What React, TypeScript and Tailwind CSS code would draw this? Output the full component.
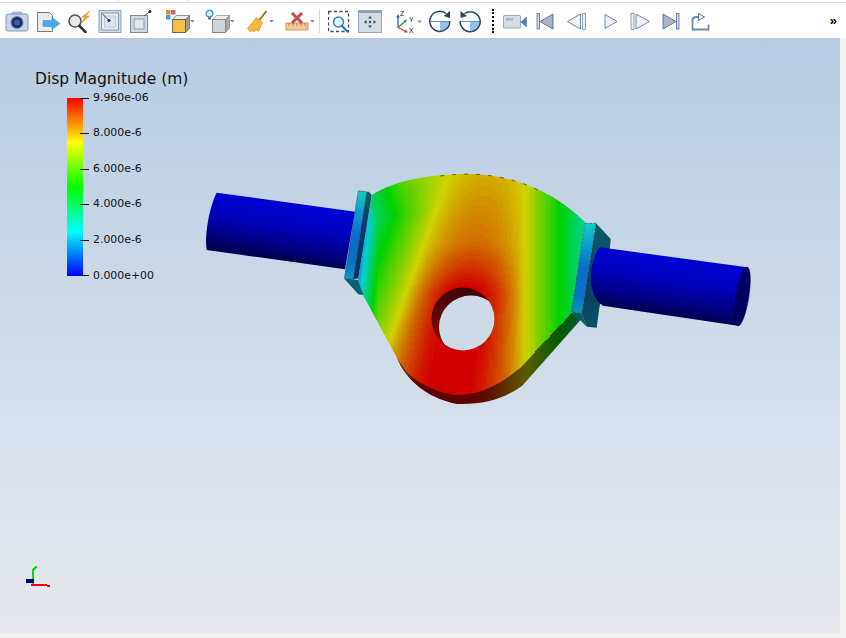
import React, { useMemo } from "react";

const stops: [number, number, number, number][] = [
  [0, 0, 0, 255],
  [0.25, 0, 255, 255],
  [0.5, 0, 255, 0],
  [0.75, 255, 255, 0],
  [1, 255, 0, 0],
];
function ramp(v: number, k: number) {
  const t = Math.max(0, Math.min(1, v));
  for (let i = 1; i < stops.length; i++) {
    if (t <= stops[i][0]) {
      const a = stops[i - 1];
      const b = stops[i];
      const f = (t - a[0]) / (b[0] - a[0]);
      const c = [1, 2, 3].map((j) => Math.round((a[j] + (b[j] - a[j]) * f) * k));
      return `rgb(${c[0]},${c[1]},${c[2]})`;
    }
  }
  return "rgb(255,0,0)";
}
function field(x: number, y: number) {
  const t = (y - 180) / 160;
  const xL = 447 - 57 * t;
  const xR = 525;
  if (x < xL) {
    const d = xL - x;
    let v = 0.75 - d * 0.00625;
    if (y < 215) v += ((215 - y) / 35) * 0.14 * Math.min(1, d / 45);
    if (x < 378 && y > 205) v -= (378 - x) * 0.012 * Math.min(1, (y - 205) / 20);
    return v;
  }
  if (x > xR) return 0.75 - (x - xR) * 0.0072;
  const c = (xL + xR) / 2;
  const h = (xR - xL) / 2;
  const s = Math.abs(x - c) / h;
  const vc = Math.min(1.02, 0.8 + 0.18 * t + 0.3 * Math.max(0, t - 0.4));
  return 0.75 + (vc - 0.75) * (1 - s * s);
}
const LEVELS = 96;
function buildBins(step: number) {
  const bins: string[] = Array(LEVELS + 1).fill("");
  for (let y = 168; y < 410; y += step) {
    for (let x = 345; x < 600; x += step) {
      const v = field(x + step / 2, y + step / 2);
      const b = Math.max(0, Math.min(LEVELS, Math.round(v * LEVELS)));
      bins[b] += `M${x} ${y}h${step}v${step}h-${step}z`;
    }
  }
  return bins;
}

const FACE =
  "M372 195C395 180 430 174 470 174C515 175 555 192 585 222L572 313L520 368C500 385 480 394 462 395C443 395 423 387 407 373L397 358L363 295L358 280Z";
const RIM = "M397 358C405 378 425 398 457 404C485 405 505 398 522 386L584 316L572 313L520 368L450 380Z";

function Part() {
  const bins = useMemo(() => buildBins(2), []);
  return (
    <svg className="absolute inset-0" width={846} height={597} viewBox="0 38 846 597">
      <defs>
        <clipPath id="faceClip"><path d={FACE} /></clipPath>
        <clipPath id="rimClip"><path d={RIM} /></clipPath>
        <clipPath id="holeClip"><ellipse cx={463} cy={319} rx={31.5} ry={31.5} /></clipPath>
        <linearGradient id="cylL" gradientUnits="userSpaceOnUse" x1={286} y1={202} x2={276} y2={260}>
          <stop offset="0" stopColor="#0000d4" />
          <stop offset="0.4" stopColor="#0000bc" />
          <stop offset="0.72" stopColor="#000088" />
          <stop offset="1" stopColor="#00004c" />
        </linearGradient>
        <linearGradient id="cylR" gradientUnits="userSpaceOnUse" x1={673} y1={257} x2={664} y2={316}>
          <stop offset="0" stopColor="#0000d4" />
          <stop offset="0.4" stopColor="#0000bc" />
          <stop offset="0.72" stopColor="#000088" />
          <stop offset="1" stopColor="#00004c" />
        </linearGradient>
        <linearGradient id="flangeF" x1="0" y1="0" x2="0" y2="1">
          <stop offset="0" stopColor="#12ccc4" />
          <stop offset="0.2" stopColor="#10a4cc" />
          <stop offset="0.5" stopColor="#0a6cc8" />
          <stop offset="0.8" stopColor="#0a70c4" />
          <stop offset="1" stopColor="#0e98c0" />
        </linearGradient>
        <linearGradient id="flangeS" x1="0" y1="0" x2="0" y2="1">
          <stop offset="0" stopColor="#0a6a68" />
          <stop offset="0.3" stopColor="#0a3c70" />
          <stop offset="1" stopColor="#0a3060" />
        </linearGradient>
        <linearGradient id="flangeB" x1="0" y1="0" x2="0" y2="1">
          <stop offset="0" stopColor="#0a5e68" />
          <stop offset="0.55" stopColor="#0a3c68" />
          <stop offset="1" stopColor="#0a5060" />
        </linearGradient>
        <linearGradient id="wall" x1="0" y1="0" x2="0" y2="1">
          <stop offset="0" stopColor="#3c0404" />
          <stop offset="0.55" stopColor="#6a0808" />
          <stop offset="1" stopColor="#a00c0c" />
        </linearGradient>
      </defs>

      <path d="M216.7 192.7L355 211.7L345 269.3L206.7 250C204 235 210 205 216.7 192.7Z" fill="url(#cylL)" />

      <g clipPath="url(#rimClip)" shapeRendering="crispEdges">
        {bins.map((d, i) => d && <path key={i} d={d} fill={ramp(i / LEVELS, 0.36)} />)}
      </g>
      <g clipPath="url(#faceClip)" shapeRendering="crispEdges">
        {bins.map((d, i) => d && <path key={i} d={d} fill={ramp(i / LEVELS, 0.82)} />)}
      </g>
      <path d="M440 176C452 174.500 462 174 470 174C500 175 525 182 545 194" fill="none" stroke="#000" strokeWidth={0.5} strokeDasharray="4 8" />
      <path d="M535 352L572 313" fill="none" stroke="#000" strokeWidth={0.6} strokeDasharray="16 6" />

      <ellipse cx={463} cy={319} rx={31.5} ry={31.5} fill="url(#wall)" />
      <ellipse cx={471} cy={327} rx={32} ry={31.5} fill="#cddae8" clipPath="url(#holeClip)" />

      <polygon points="358.3,190.7 366.7,191.7 353.3,279.3 344.3,278.7" fill="url(#flangeF)" stroke="#0a3540" strokeWidth={0.4} />
      <polygon points="366.7,191.7 369,191.7 371.7,195 358.3,278.3 353.3,279.3" fill="url(#flangeS)" />
      <polygon points="344.3,278.7 353.3,279.3 358,280 363.3,295 358.3,294.3" fill="#0a5f70" />

      <polygon points="596,223.3 610.7,239 610,247.3 599.3,308.3 596.7,327.7 586.7,326.7 581.7,313.3" fill="url(#flangeB)" />
      <polygon points="585,223.3 596,223.3 581.7,313.3 571.7,311.7" fill="url(#flangeF)" stroke="#0a3540" strokeWidth={0.4} strokeDasharray="3 1" />
      <polygon points="571.7,311.7 581.7,313.3 586.7,326.7 580,320" fill="#0a5a62" />

      <path d="M600 247.3L747 267.3L737.7 325.7L603 305.7C585 295 590 258 600 247.3Z" fill="url(#cylR)" />
      <ellipse cx={742.5} cy={296.5} rx={6.3} ry={29.8} transform="rotate(9 742.5 296.5)" fill="#000064" stroke="#000030" strokeWidth={0.5} />

      <g fill="none" strokeLinecap="square" shapeRendering="crispEdges">
        <path d="M33 584V570L36 567" stroke="#00e000" strokeWidth={1.8} />
        <path d="M32 584.500H43L49 586" stroke="#f00000" strokeWidth={2} />
        <path d="M28 581H32" stroke="#000080" strokeWidth={3.500} />
      </g>
    </svg>
  );
}

const labels = ["9.960e-06", "8.000e-6", "6.000e-6", "4.000e-6", "2.000e-6", "0.000e+00"];

function Legend() {
  return (
    <div className="absolute left-[35px] top-[32px] font-['DejaVu_Sans',sans-serif] text-[#111]">
      <div className="text-[15.5px] leading-[18px] whitespace-nowrap">Disp Magnitude (m)</div>
      <div className="relative mt-[10px] ml-[32px] flex h-[178px] w-[130px]">
        <div className="h-full w-[16px] bg-[linear-gradient(to_bottom,#ff0000_0%,#ffff00_25%,#00ff00_50%,#00ffff_75%,#0000ff_100%)]" />
        <div className="absolute left-[13px] top-[-9px] bottom-[-9px] flex flex-col justify-between">
          {labels.map((l) => (
            <div key={l} className="flex h-[18px] items-center">
              <span className="h-px w-[9px] bg-[#111]" />
              <span className="ml-[4px] text-[10.9px] leading-none">{l}</span>
            </div>
          ))}
        </div>
      </div>
    </div>
  );
}

const Arrow = ({ x }: { x: number }) => <path d={`M${x} 11h5l-2.500 2.500z`} fill="#8a8a8a" />;

type Item = { w: number; ml: number; el: React.ReactNode };

const ICONS: Item[] = [
  { w: 24, ml: 0, el: (<>
    <rect x={1} y={5} width={22} height={17} rx={2} fill="#c6d6ea" stroke="#8199b8" />
    <path d="M6 5l2-2h8l2 2z" fill="#a8bcd6" stroke="#8199b8" strokeWidth={0.6} />
    <circle cx={12} cy={13.500} r={6} fill="#1b2f68" stroke="#6d86ac" />
    <circle cx={12} cy={13.500} r={2.800} fill="#3d62a8" />
  </>) },
  { w: 24, ml: 7, el: (<>
    <path d="M1.500 3.500h12l3 3v16h-15z" fill="#e9ebf0" stroke="#777" />
    <path d="M7 11.500h9V8.500l8 6-8 6v-3H7z" fill="#4aa9ea" stroke="#2f86c8" strokeWidth={0.5} />
  </>) },
  { w: 24, ml: 6, el: (<>
    <circle cx={9} cy={12} r={6} fill="#e4e9f0" stroke="#555" strokeWidth={1.600} />
    <path d="M13.500 17l6 6" stroke="#333" strokeWidth={2.600} strokeLinecap="round" />
    <path d="M23.500 2L16 8h3.500L15.500 14 23.500 7h-3.500z" fill="#f0a030" stroke="#f0a030" strokeWidth={0.8} />
  </>) },
  { w: 24, ml: 8, el: (<>
    <rect x={1} y={1.500} width={22} height={22} fill="#d4dbe5" stroke="#93a1b4" />
    <rect x={3.500} y={4} width={17} height={17} fill="#e7ebf1" stroke="#8a99ac" />
    <rect x={6.500} y={7} width={11} height={11} fill="#dfe4ec" stroke="#aab5c4" strokeWidth={0.6} />
    <path d="M4 4.500l7 7" stroke="#36486a" />
    <circle cx={11} cy={11.500} r={1.500} fill="#1a2f66" />
  </>) },
  { w: 26, ml: 5, el: (<>
    <rect x={3.500} y={6.500} width={17} height={17} fill="#d2d8e2" stroke="#7d8ba0" />
    <rect x={7} y={10} width={10} height={10} fill="#e2e6ec" stroke="#7d8ba0" strokeWidth={0.8} />
    <path d="M17 7l6-4.500" stroke="#36486a" />
    <circle cx={23} cy={2.500} r={1.500} fill="#1a2f66" />
  </>) },
  { w: 30, ml: 11, el: (<>
    <rect x={2} y={1} width={4.500} height={4.500} fill="#e8883a" />
    <rect x={2} y={6} width={4.500} height={4.500} fill="#3f9fe0" />
    <rect x={7} y={1} width={4.500} height={4.500} fill="#c96a6a" />
    <path d="M8.500 10.500l4-4h13l-4 4z" fill="#ededed" stroke="#666" strokeWidth={0.7} />
    <path d="M21.500 10.500l4-4v13l-4 4z" fill="#9a9a9a" stroke="#666" strokeWidth={0.7} />
    <rect x={8.500} y={10.500} width={13} height={13} fill="#f8bf40" stroke="#666" />
    <Arrow x={26} />
  </>) },
  { w: 34, ml: 6, el: (<>
    <circle cx={9.500} cy={4.500} r={3.300} fill="#dff0ff" stroke="#3a9be0" strokeWidth={1.400} />
    <rect x={8} y={8} width={3} height={2.500} fill="#777" />
    <path d="M12.500 10.500l4-4h13l-4 4z" fill="#ededed" stroke="#888" strokeWidth={0.7} />
    <path d="M25.500 10.500l4-4v13l-4 4z" fill="#a8a8a8" stroke="#888" strokeWidth={0.7} />
    <rect x={12.500} y={10.500} width={13} height={13} fill="#cfd4da" stroke="#888" />
    <Arrow x={30} />
  </>) },
  { w: 30, ml: 11, el: (<>
    <path d="M21.500 2l-8 10" stroke="#a8662a" strokeWidth={2} />
    <path d="M11.500 8.500l6 5-4 9-3-2-1 2.500-2.500-1.500-1.500 1.500-3-3.500z" fill="#f4b640" stroke="#c98a20" strokeWidth={0.6} />
    <Arrow x={24} />
  </>) },
  { w: 30, ml: 9, el: (<>
    <rect x={2} y={14} width={22} height={7} fill="#f0c890" stroke="#c9884a" strokeWidth={0.8} />
    <path d="M5 14v3M9 14v3M13 14v3M17 14v3M21 14v3" stroke="#a86a30" strokeWidth={0.7} />
    <path d="M8 4l10 10M18 4L8 14" stroke="#c84a50" strokeWidth={3} />
    <Arrow x={26} />
  </>) },
];
const ICONS2: Item[] = [
  { w: 24, ml: 0, el: (<>
    <rect x={0.500} y={2.500} width={20} height={20} fill="none" stroke="#445" strokeWidth={1.300} strokeDasharray="3 2.500" />
    <circle cx={10.500} cy={13} r={5} fill="#e8f0f8" stroke="#3a80b8" strokeWidth={1.500} />
    <path d="M14 17l5.500 5.500" stroke="#2a78b8" strokeWidth={2.400} strokeLinecap="round" />
  </>) },
  { w: 24, ml: 6, el: (<>
    <rect x={0.500} y={1.500} width={23} height={22} fill="#d5dbe4" stroke="#9aa6b8" />
    <rect x={1} y={2} width={22} height={2} fill="#8f9db3" />
    <circle cx={12} cy={13} r={1.200} fill="#3a4a62" />
    <path d="M12 7l2 2.500h-4zM12 19l2-2.500h-4zM6 13l2.500-2v4zM18 13l-2.500-2v4z" fill="#3a4a62" />
  </>) },
  { w: 30, ml: 14, el: (<>
    <path d="M2 18.500V8" stroke="#2858c8" strokeWidth={1.300} />
    <path d="M2 5l-1.800 3.500h3.600z" fill="#2858c8" />
    <path d="M2 18.500l7-6" stroke="#2a9a40" strokeWidth={1.300} />
    <path d="M11 10.500l-3.500.8 2 2.400z" fill="#2a9a40" />
    <path d="M2 18.500l8 4" stroke="#d83030" strokeWidth={1.300} />
    <path d="M12 23.500l-2.500-3-1.200 3z" fill="#d83030" />
    <text x={4} y={7} fontSize={7} fontFamily="Liberation Sans, sans-serif" fill="#222">Z</text>
    <text x={13} y={13} fontSize={7} fontFamily="Liberation Sans, sans-serif" fill="#222">Y</text>
    <text x={13} y={23.500} fontSize={7} fontFamily="Liberation Sans, sans-serif" fill="#222">X</text>
    <path d="M21 11.500h5l-2.500 2.500z" fill="#8a8a8a" />
  </>) },
  { w: 24, ml: 2, el: (<>
    <path d="M12 12.500h9.500a9.800 9.800 0 0 1-9.500 9.800z" fill="#8ec4ec" />
    <path d="M2 12.500h20" stroke="#4a80b0" strokeWidth={0.8} />
    <path d="M18 4.500A10 10 0 1 0 21.800 12" fill="none" stroke="#2a4468" strokeWidth={1.500} />
    <path d="M22 2L22 9l-6.500-2z" fill="#2a4468" />
  </>) },
  { w: 24, ml: 7, el: (<>
    <path d="M11 12.500h9.800a9.800 9.800 0 0 1-9.800 9.800z" fill="#8ec4ec" />
    <path d="M1 12.500h20" stroke="#4a80b0" strokeWidth={0.8} />
    <path d="M5.500 4.500A10 10 0 1 1 1.200 12" fill="none" stroke="#2a4468" strokeWidth={1.500} />
    <path d="M1.500 2L1.500 9 8 7z" fill="#2a4468" />
  </>) },
];
const ICONS3: Item[] = [
  { w: 24, ml: 0, el: (<>
    <rect x={0.500} y={6.500} width={17} height={12.500} rx={1} fill="#d5dce6" stroke="#9aa8ba" />
    <rect x={3} y={9} width={7} height={2.500} fill="#aab6c6" />
    <path d="M18 13l5.500-5v10z" fill="#3a8ac8" stroke="#5c7a9c" strokeWidth={0.7} />
  </>) },
  { w: 24, ml: 6, el: (<>
    <rect x={4} y={4.500} width={2.500} height={15.500} fill="#c9d3df" stroke="#5d7698" strokeWidth={0.8} />
    <path d="M20 5v15L7 12.500z" fill="#a9b4c2" stroke="#5d7698" />
  </>) },
  { w: 24, ml: 8, el: (<>
    <path d="M15.500 5v15L2.500 12.500z" fill="#eef1f5" stroke="#6f88aa" />
    <rect x={17.500} y={4.500} width={3} height={16} fill="#eef1f5" stroke="#6f88aa" strokeWidth={0.8} />
  </>) },
  { w: 24, ml: 9, el: <path d="M7 5.500v14l12-7z" fill="#eef1f5" stroke="#6f88aa" /> },
  { w: 24, ml: 6, el: (<>
    <rect x={3} y={4.500} width={3} height={16} fill="#eef1f5" stroke="#6f88aa" strokeWidth={0.8} />
    <path d="M8 5v15l13.500-7.500z" fill="#eef1f5" stroke="#6f88aa" />
  </>) },
  { w: 24, ml: 7, el: (<>
    <path d="M4 5v15L17 12.500z" fill="#a9b4c2" stroke="#5d7698" />
    <rect x={17.500} y={4.500} width={2.500} height={15.500} fill="#c9d3df" stroke="#5d7698" strokeWidth={0.8} />
  </>) },
  { w: 24, ml: 7, el: (<>
    <path d="M2.500 10v10.500h16v-5" fill="none" stroke="#6f88aa" strokeWidth={1.800} />
    <path d="M2.500 11c0-2 1.500-3 4-3h2" fill="none" stroke="#6f88aa" strokeWidth={1.800} />
    <path d="M8.500 4.500l6 3.500-6 3.500z" fill="#eef1f5" stroke="#5d7698" />
  </>) },
];

function IconRow({ items }: { items: Item[] }) {
  return (
    <>
      {items.map((it, i) => (
        <svg key={i} width={it.w} height={24} viewBox={`0 0 ${it.w} 24`} style={{ marginLeft: it.ml }} className="shrink-0">
          {it.el}
        </svg>
      ))}
    </>
  );
}

export default function App() {
  return (
    <div className="flex h-[638px] w-[846px] flex-col overflow-hidden bg-[#f1f1f1] font-['Liberation_Sans',sans-serif]">
      <div className="flex h-[3px] shrink-0 border-b border-[#dcdcdc] bg-white">
        <div className="w-[119px] border-r border-[#dcdcdc]" />
        <div className="w-[70px] border-r border-[#dcdcdc]" />
      </div>
      <div className="flex h-[35px] shrink-0 items-center bg-white pl-[5px] pr-[9px]">
        <IconRow items={ICONS} />
        <div className="ml-[5px] h-[24px] w-px shrink-0 bg-[#d8d8d8]" />
        <div className="ml-[8px] flex items-center"><IconRow items={ICONS2} /></div>
        <div className="ml-[9px] h-[24px] w-[3px] shrink-0 border-l-[2px] border-dotted border-black" />
        <div className="ml-[8px] flex items-center"><IconRow items={ICONS3} /></div>
        <span className="ml-auto text-[13px] font-bold leading-none text-black">»</span>
      </div>
      <div className="relative mb-[4px] mr-[6px] flex-1 bg-linear-to-b from-[#b7cce3] to-[#e7e9ee]">
        <Part />
        <Legend />
      </div>
    </div>
  );
}
